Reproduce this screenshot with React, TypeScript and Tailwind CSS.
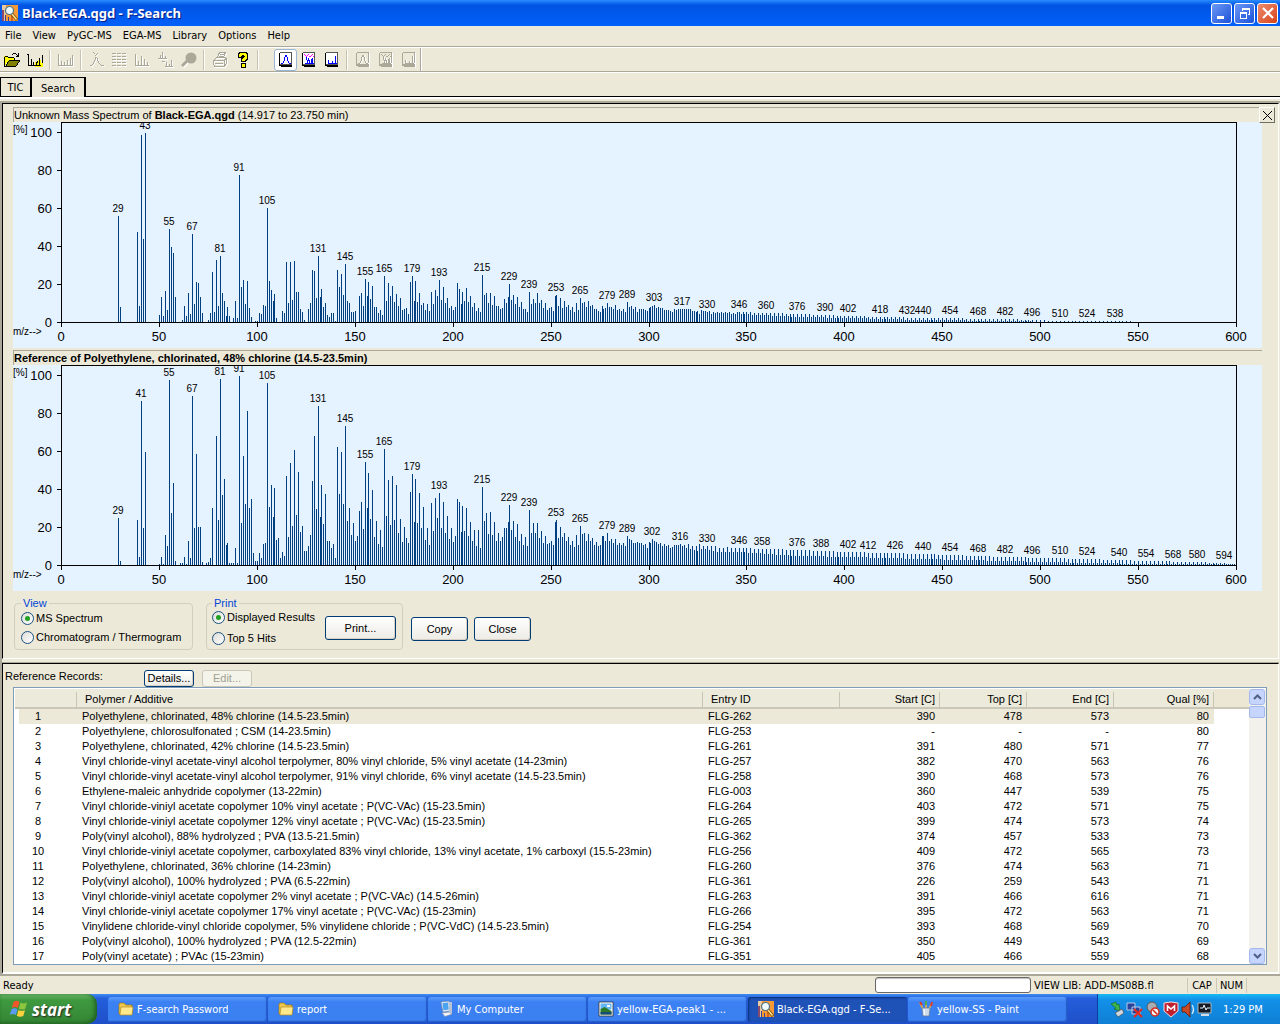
import { useEffect, useRef, useState } from "react";
import type { ReactNode } from "react";

type Peak = [number, number[]];

const unknownPeaks: Peak[] = [
  [29, [106, 15]],
  [39, [90, 16, 187, 83, 189]],
  [50, [7, 25, 6, 31, 12, 93, 75, 69, 25]],
  [62, [2, 16, 6, 29, 8, 88, 18, 40, 39, 25, 9]],
  [75, [2, 9, 50, 10, 62, 16, 66, 29, 21, 6, 15, 6]],
  [88, [4, 21, 4, 147, 35, 42, 18, 41, 14, 5]],
  [99, [1, 1, 9, 8, 17, 16, 114, 41, 32, 21, 28, 4]],
  [113, [11, 9, 60, 19, 60, 22, 61, 30, 30, 13, 10, 2]],
  [126, [13, 19, 52, 51, 24, 66, 25, 33, 15, 19, 7, 5, 9, 9, 1]],
  [141, [52, 35, 48, 27, 58, 21, 19, 10, 10, 11]],
  [152, [26, 29, 16, 43, 26, 40, 23, 36, 15, 15, 9, 12, 7, 46, 21, 39, 26, 36, 20, 28, 16, 24, 12, 13, 14, 8]],
  [178, [40, 46, 21, 41, 20, 29, 17, 19, 12, 18, 11, 30, 18, 32, 26, 42, 22, 35, 19, 24, 14, 16, 12, 15]],
  [202, [39, 33, 18, 30, 21, 34, 20, 26, 15, 19, 11, 14, 10, 47, 27, 29, 19, 29, 17, 26, 16, 16, 13, 14]],
  [226, [23, 19, 25, 38, 22, 27, 18, 25, 15, 20, 13, 13, 10, 30, 18, 23, 19, 29, 19, 22, 14, 19, 12, 14, 15, 11]],
  [252, [26, 27, 16, 24, 14, 21, 15, 17, 12, 15, 10, 19, 12, 24, 19, 20, 15, 21, 16, 17, 13, 13, 11, 10]],
  [276, [16, 13, 14, 19, 15, 15, 13, 17, 12, 13, 11, 13, 10, 20, 15, 16, 13, 15, 10, 13, 13, 13, 12, 11]],
  [300, [14, 15, 16, 17, 14, 15, 14, 14, 12, 12, 12, 11, 10, 13, 12, 13, 13, 13, 13, 13, 13, 13, 11, 11]],
  [324, [10, 11, 8, 12, 11, 11, 10, 11, 8, 10, 9, 10, 9, 10, 9, 10, 9, 10, 8, 9, 8, 10]],
];

const referencePeaks: Peak[] = [
  [29, [47, 4]],
  [39, [45, 8, 164, 37, 113]],
  [50, [1, 8, 1, 30, 19, 185, 52, 82, 4]],
  [61, [2, 2, 8, 1, 24, 7, 169, 37, 111, 38, 38, 3]],
  [74, [2, 3, 7, 57, 0, 129, 45, 186, 70, 86, 20, 22, 2, 2, 2, 17, 2]],
  [91, [189, 42, 109, 61, 154, 57, 66, 12, 4, 4, 12, 7, 21, 22]],
  [105, [182, 58, 80, 48, 77, 25, 27, 7, 13, 9, 89, 28, 102, 39, 115, 50, 93, 33, 39, 14, 14, 19, 30]],
  [128, [84, 129, 56, 159, 48, 80, 41, 71, 24, 24, 17, 21, 7, 118, 71, 113, 61, 139, 44, 57, 30, 42, 24, 29]],
  [152, [54, 63, 36, 103, 57, 92, 46, 75, 28, 44, 21, 35, 18, 116, 49, 85, 40, 89, 45, 80, 32, 46, 23, 38, 27, 22]],
  [178, [73, 91, 43, 86, 42, 72, 37, 58, 25, 37, 20, 62, 34, 67, 47, 72, 37, 63, 32, 49, 26, 37, 23, 29]],
  [202, [66, 63, 33, 59, 34, 57, 29, 43, 24, 35, 19, 35, 17, 78, 44, 52, 31, 53, 30, 43, 24, 32, 24, 28]],
  [226, [37, 37, 43, 60, 35, 44, 28, 41, 24, 31, 20, 28, 19, 55, 32, 42, 32, 42, 27, 34, 22, 29, 21, 22, 24, 20]],
  [252, [43, 45, 27, 38, 28, 32, 24, 28, 20, 24, 18, 30, 20, 39, 31, 32, 24, 31, 24, 27, 20, 23, 19, 20]],
  [276, [29, 29, 24, 32, 24, 26, 22, 26, 20, 22, 20, 22, 19, 29, 26, 25, 22, 22, 23, 22, 22, 20, 21, 17]],
  [300, [23, 22, 26, 24, 23, 21, 22, 19, 21, 19, 20, 17, 18, 20, 20, 20, 21, 19, 20, 17, 21, 16, 19, 15]],
  [324, [19, 14, 21, 16, 19, 16, 19, 15, 19, 14, 19, 13, 17, 13, 17, 13, 18, 13, 17, 13, 17, 13]],
];

// [m/z, even peak, odd peak], interpolated between the points
const unknownTail = [
  [346, 10, 8],
  [376, 8, 5],
  [402, 6, 4],
  [440, 4, 2],
  [482, 3, 1],
  [510, 1, 0],
  [546, 1, 0],
];
const referenceTail = [
  [346, 17, 13],
  [376, 15, 9],
  [402, 13, 8],
  [440, 11, 6],
  [482, 8, 4],
  [524, 6, 2],
  [554, 4, 1],
  [580, 3, 1],
  [599, 1, 1],
];

const unknownLabels = [
  29, 43, 55, 67, 81, 91, 105, 131, 145, 155, 165, 179, 193, 215, 229, 239, 253, 265, 279, 289, 303, 317, 330, 346,
  360, 376, 390, 402, 418, 432, 440, 454, 468, 482, 496, 510, 524, 538,
];
const referenceLabels = [
  29, 41, 55, 67, 81, 91, 105, 131, 145, 155, 165, 179, 193, 215, 229, 239, 253, 265, 279, 289, 302, 316, 330, 346,
  358, 376, 388, 402, 412, 426, 440, 454, 468, 482, 496, 510, 524, 540, 554, 568, 580, 594,
];

function buildSpectrum(peaks: Peak[], tail: number[][]) {
  const heights = new Map<number, number>();
  peaks.forEach(([start, values]) => values.forEach((v, i) => heights.set(start + i, v)));
  for (let i = 0; i < tail.length - 1; i++) {
    const [m0, hi0, lo0] = tail[i];
    const [m1, hi1, lo1] = tail[i + 1];
    for (let m = m0; m <= m1; m++) {
      const t = (m - m0) / (m1 - m0);
      const h = m % 2 === 0 ? hi0 + (hi1 - hi0) * t : lo0 + (lo1 - lo0) * t;
      heights.set(m, Math.round(h));
    }
  }
  return heights;
}

const unknownSpectrum = buildSpectrum(unknownPeaks, unknownTail);
const referenceSpectrum = buildSpectrum(referencePeaks, referenceTail);

const records = [
  ["Polyethylene, chlorinated, 48% chlorine (14.5-23.5min)", "FLG-262", "390", "478", "573", "80"],
  ["Polyethylene, chlorosulfonated ; CSM (14-23.5min)", "FLG-253", "-", "-", "-", "80"],
  ["Polyethylene, chlorinated, 42% chlorine (14.5-23.5min)", "FLG-261", "391", "480", "571", "77"],
  ["Vinyl chloride-vinyl acetate-vinyl alcohol terpolymer, 80% vinyl chloride, 5% vinyl acetate (14-23min)", "FLG-257", "382", "470", "563", "76"],
  ["Vinyl chloride-vinyl acetate-vinyl alcohol terpolymer, 91% vinyl chloride, 6% vinyl acetate (14.5-23.5min)", "FLG-258", "390", "468", "573", "76"],
  ["Ethylene-maleic anhydride copolymer (13-22min)", "FLG-003", "360", "447", "539", "75"],
  ["Vinyl chloride-viniyl acetate copolymer 10% vinyl acetate ; P(VC-VAc) (15-23.5min)", "FLG-264", "403", "472", "571", "75"],
  ["Vinyl chloride-viniyl acetate copolymer 12% vinyl acetate ; P(VC-VAc) (15-23.5min)", "FLG-265", "399", "474", "573", "74"],
  ["Poly(vinyl alcohol), 88% hydrolyzed ; PVA (13.5-21.5min)", "FLG-362", "374", "457", "533", "73"],
  ["Vinyl chloride-viniyl acetate copolymer, carboxylated 83% vinyl chloride, 13% vinyl acetate, 1% carboxyl (15.5-23min)", "FLG-256", "409", "472", "565", "73"],
  ["Polyethylene, chlorinated, 36% chlorine (14-23min)", "FLG-260", "376", "474", "563", "71"],
  ["Poly(vinyl alcohol), 100% hydrolyzed ; PVA (6.5-22min)", "FLG-361", "226", "259", "543", "71"],
  ["Vinyl chloride-viniyl acetate copolymer 2% vinyl acetate ; P(VC-VAc) (14.5-26min)", "FLG-263", "391", "466", "616", "71"],
  ["Vinyl chloride-viniyl acetate copolymer 17% vinyl acetate ; P(VC-VAc) (15-23min)", "FLG-266", "395", "472", "563", "71"],
  ["Vinylidene chloride-vinyl chloride copolymer, 5% vinylidene chloride ; P(VC-VdC) (14.5-23.5min)", "FLG-254", "393", "468", "569", "70"],
  ["Poly(vinyl alcohol), 100% hydrolyzed ; PVA (12.5-22min)", "FLG-361", "350", "449", "543", "69"],
  ["Poly(vinyl acetate) ; PVAc (15-23min)", "FLG-351", "405", "466", "559", "68"],
];

const SpectrumChart = ({
  title,
  spectrum,
  labels,
}: {
  title: string;
  spectrum: Map<number, number>;
  labels: number[];
}) => {
  const box = useRef<HTMLDivElement>(null);
  const [width, setWidth] = useState(1249);

  useEffect(() => {
    if (!box.current) return;
    const observer = new ResizeObserver(([entry]) => setWidth(Math.round(entry.contentRect.width)));
    observer.observe(box.current);
    return () => observer.disconnect();
  }, []);

  const left = 48;
  const base = 200;
  const right = width - 26;
  const x = (m: number) => left + Math.round((m * (right - left)) / 600);
  const clipId = "plot-" + title.slice(0, 3);

  return (
    <div ref={box} className="w-full overflow-hidden bg-[#e5f2ff]">
      <svg
        width={width}
        height={226}
        role="img"
        aria-label={title}
        className="block font-['Liberation_Sans',Arial,sans-serif]"
      >
        <clipPath id={clipId}>
          <rect x={left} y={1} width={right - left + 20} height={base} />
        </clipPath>
        <g shapeRendering="crispEdges">
          {[...spectrum].map(([m, h]) => (
            <rect key={m} x={x(m)} y={base - h} width={1} height={h} fill="#004080" />
          ))}
          <rect x={left} y={0} width={1} height={base + 5} />
          <rect x={right} y={0} width={1} height={base + 5} />
          <rect x={left} y={0} width={right - left} height={1} />
          <rect x={left} y={base} width={right - left} height={1} />
          {[0, 20, 40, 60, 80, 100].map((v) => (
            <rect key={v} x={left - 4} y={base - v * 1.9} width={4} height={1} />
          ))}
          {[50, 100, 150, 200, 250, 300, 350, 400, 450, 500, 550].map((m) => (
            <rect key={m} x={x(m)} y={base} width={1} height={5} />
          ))}
        </g>
        <g fontSize={13} textAnchor="end">
          {[0, 20, 40, 60, 80, 100].map((v) => (
            <text key={v} x={39} y={base + 5 - v * 1.9}>
              {v}
            </text>
          ))}
        </g>
        <g fontSize={13} textAnchor="middle">
          {[0, 50, 100, 150, 200, 250, 300, 350, 400, 450, 500, 550, 600].map((m) => (
            <text key={m} x={x(m)} y={219}>
              {m}
            </text>
          ))}
        </g>
        <g fontSize={10} textAnchor="middle" clipPath={`url(#${clipId})`}>
          {labels.map((m) => (
            <text key={m} x={x(m)} y={base - 4 - (spectrum.get(m) ?? 0)}>
              {m}
            </text>
          ))}
        </g>
        <text x={0} y={11} fontSize={10}>
          [%]
        </text>
        <text x={0} y={213} fontSize={10}>
          m/z--&gt;
        </text>
      </svg>
    </div>
  );
};

const Icon = ({ size = 16, children }: { size?: number; children: ReactNode }) => (
  <svg width={size} height={size} viewBox="0 0 16 16" fill="none" shapeRendering="crispEdges" aria-hidden="true">
    {children}
  </svg>
);

// Disabled toolbar drawings are engraved: a white copy one pixel down and right.
const Engraved = ({ d }: { d: string }) => (
  <Icon>
    <path d={d} transform="translate(1 1)" stroke="#fff" />
    <path d={d} stroke="#aca899" />
  </Icon>
);

const OpenIcon = () => (
  <Icon>
    <path d="M0 4h4v1h6v4H4l-3 5H0z" fill="#ff0" />
    <path d="M2 14l3-6h11l-4 6z" fill="#808000" />
    <path
      d="M.5 14V5M1 4.500h3M4 5.500h6M10.500 6v2M5 8.500h10M4.500 9v1M3.500 10v2M2.500 12v2M15.500 8v2M14.500 10v1M13.500 11v2M12.500 13v1M0 14.500h12"
      stroke="#000"
    />
    <path d="M8.500 2v1M9 1.500h3M12.500 2v1M13.500 3v1M14.500 1v4M12 4.500h3" stroke="#000" />
  </Icon>
);

const PeaksIcon = () => (
  <Icon>
    <path d="M8 10h3V8h3v3h2v4H8z" fill="#ff0" />
    <path
      d="M0 2.500h2M1.500 2v12M1 13.500h13M4.500 7v6M6.500 10v3M9.500 10v3M10.500 9v2M12.500 6v7M15.500 3v8"
      stroke="#000"
    />
  </Icon>
);

const PrinterIcon = () => (
  <Engraved d="M5.500 5l2-4.500h6l-2 4.500M8 2.500h4M7 4.500h4M1.500 8.500l3-3h9l1 2v4l-2 2.500h-10l-1-2zM2 8.500h10l2-2M3 11.500h8M12.500 9v5" />
);

const HelpIcon = () => (
  <Icon>
    <path d="M5 6V3h1V2h4v1h1v3h-1v1H9v1H8v2" stroke="#000" strokeWidth="4" />
    <path d="M6 11h5v5H6z" fill="#000" />
    <path d="M5 5V3h1V2h4v1h1v3h-1v1H9v1H8v1" stroke="#ff0" strokeWidth="1.800" />
    <path d="M7 12h3v3H7z" fill="#ff0" />
  </Icon>
);

const sheetLines = [
  "M3 11.500h2M5.500 9v2M6.500 5v4M7.500 3v2M8.500 3v2M9.500 5v4M10.500 9v2M11 11.500h2",
  "M4 11.500h9M5.500 5v3M6.500 8v3M7.500 6v3M8.500 8v3M10.500 7v4M11.500 6v5",
  "M4.500 8v3M4 11.500h9M8.500 9v2M11.500 4v7",
];

const Sheet = ({ kind, disabled }: { kind: number; disabled?: boolean }) => {
  const ink = disabled ? "#aca899" : "#00f";
  const edge = disabled ? "#aca899" : "#000";
  return (
    <Icon>
      {disabled && <path d="M14.500 1v15H3" stroke="#fff" />}
      <path d="M1.500 1.500l1-1h11v12h-12z" fill={disabled ? "#ece9d8" : "#fff"} stroke={disabled ? "#aca899" : "#555"} />
      <path d="M1.500 1v13M1 13.500h3M3 14.500h11M13.500 13v2M4 13.500h10" stroke={edge} />
      {disabled && <path d={sheetLines[kind]} stroke="#fff" transform="translate(1 0)" />}
      <path d={sheetLines[kind]} stroke={ink} />
      {kind === 1 && (
        <path
          d="M3 2.500h1M4 3.500h1M5 4.500h1M6 3.500h1M7 2.500h1M8 4.500h2M10 3.500h1M11 2.500h1M12 4.500h1"
          stroke={disabled ? ink : "#f0f"}
        />
      )}
    </Icon>
  );
};

const AppIcon = () => (
  <svg width="16" height="16" viewBox="0 0 16 16" aria-hidden="true">
    <path d="M0 0h16v16H0z" fill="#f59a35" />
    <path d="M0 0h4v16H0z" fill="#e8c9a0" />
    <path d="M0 5h2v11H0z" fill="#8c4a6b" />
    <path d="M3 10h1v6H3zM6 12h1v4H6z" fill="#3a3f8f" />
    <path d="M9 10h2v6H9z" fill="#d4641c" />
    <path d="M10 9l5 6" stroke="#7a4a12" strokeWidth="3" />
    <path d="M10 9l4.500 5.500" stroke="#fbe28a" strokeWidth="1.600" />
    <circle cx="7.500" cy="5.500" r="4" fill="#eefaff" stroke="#50707f" strokeWidth="1.200" />
  </svg>
);

const FolderIcon = () => (
  <svg width="16" height="16" viewBox="0 0 16 16" aria-hidden="true">
    <path d="M1 3l1-1h4l2 2h6v9H1z" fill="#f0c64b" stroke="#9b7516" strokeWidth=".7" />
    <path d="M2 13l1-7h12l-1 8H2z" fill="#ffe98c" stroke="#b38b22" strokeWidth=".7" />
  </svg>
);

const ComputerIcon = () => (
  <svg width="16" height="16" viewBox="0 0 16 16" aria-hidden="true">
    <path d="M3 1l8-1 1 10-7 1z" fill="#dfe9f5" stroke="#7e93b2" strokeWidth=".7" />
    <path d="M4.500 2.200l5.500-.8.700 7-5.300.9z" fill="#4aa3ef" />
    <path d="M11 1h3v12l-3 1z" fill="#b8c4d6" />
    <path d="M4 12l7-1 3 2-7 2.500z" fill="#f2f4f8" stroke="#8492a8" strokeWidth=".6" />
  </svg>
);

const ImageIcon = () => (
  <svg width="16" height="16" viewBox="0 0 16 16" aria-hidden="true">
    <path d="M1 1h14v14H1z" fill="#fff" stroke="#333" strokeWidth=".8" />
    <path d="M2.500 2.500h11v6h-11z" fill="#63b7f4" />
    <path d="M2.500 8l4-2 7 4v3.500h-11z" fill="#2b7a2a" />
    <path d="M2.500 11h11v2.500h-11z" fill="#174d76" />
    <path d="M9 4h3v2H9z" fill="#fff" />
  </svg>
);

const PaintIcon = () => (
  <svg width="16" height="16" viewBox="0 0 16 16" aria-hidden="true">
    <path d="M5 8L2 2M8 8V1M11 8l3-6" stroke="#e8b23c" strokeWidth="1.600" />
    <path d="M2 1l2 3M14 1l-1 4" stroke="#d83a2a" strokeWidth="2" />
    <path d="M8 0v4" stroke="#4bb24b" strokeWidth="2" />
    <path d="M4 7h8l-1 8H5z" fill="#cfdbe8" stroke="#6c7d95" strokeWidth=".7" />
    <path d="M6 8l.5 6" stroke="#fff" />
  </svg>
);

const FlagIcon = () => (
  <svg width="20" height="20" viewBox="0 0 20 20" aria-hidden="true">
    <path d="M4.500 3c2-1.600 4-1.600 6-.2L8.800 9C6.800 7.600 4.800 7.800 2.800 9z" fill="#f0562a" />
    <path d="M11.500 3.500c2 1.200 4 1.200 6.500 0L16.300 9.700c-2 1.200-4.500 1-6.500 0z" fill="#8cc63f" />
    <path d="M2.500 10.200c2-1.400 4-1.300 6 0L6.800 16c-2-1.300-4-1.200-6 0z" fill="#5b9bf5" />
    <path d="M9.500 10.900c2 1.200 4.300 1.200 6.500 0l-1.700 6c-2.200 1.200-4.400 1-6.500-.2z" fill="#fbd13c" />
  </svg>
);

const TrayIcons = () => (
  <svg width="102" height="17" viewBox="0 0 102 17" aria-hidden="true">
    <path d="M1 3l5-2 1 3 2-1 1 7-6-2 2-1z" fill="#3cb54a" stroke="#1c6b2b" strokeWidth=".7" />
    <path d="M5 12l7-4 2 4-6 4z" fill="#cfd6dc" stroke="#3d4a57" strokeWidth=".7" />
    <path d="M17 2h8v7h-8zM22 6h8v7h-8z" fill="#28449a" stroke="#b9c9e8" />
    <path d="M24 8l8 8M32 8l-8 8" stroke="#e3281d" strokeWidth="2" />
    <circle cx="42" cy="6" r="5" fill="#a9adb3" stroke="#555" />
    <circle cx="45" cy="11" r="4" fill="#f4f4f4" stroke="#d52b1e" strokeWidth="1.500" />
    <path d="M42.500 8.500l5 5" stroke="#d52b1e" strokeWidth="1.500" />
    <path d="M54 2l7-1 7 1v8l-7 6-7-6z" fill="#c01f2e" stroke="#f4dcdc" />
    <path d="M57.500 10V5l3.500 3 3.500-3v5" stroke="#fff" strokeWidth="1.600" fill="none" />
    <path d="M72 6h3l5-5v15l-5-5h-3z" fill="#c94a24" stroke="#5d1a0a" strokeWidth=".8" />
    <path d="M82 4q3 4.500 0 9" stroke="#dce9f8" strokeWidth="1.300" fill="none" />
    <path d="M88 2h13v10H88z" fill="#151a22" stroke="#a9b7c4" />
    <path d="M90 7h3l1-3 2 5 1-2h3" stroke="#e8f2ff" fill="none" />
    <path d="M91 14h8" stroke="#d5dbe2" strokeWidth="2" />
  </svg>
);

const disabledTools = [
  {
    name: "Peak pick",
    d: "M1 13.500h2M3.500 12v1M4.500 10v2M5.500 8v2M6.500 5v3M7.500 5v1M8.500 6v3M9.500 9v2M10.500 11v1M11 12.500h1M12 13.500h3M6.500 3v1M4 .500h1M5 1.500h1M7 2.500h1M8 1.500h1",
  },
  {
    name: "Peak table",
    d: "M0 1.500h4M5 1.500h4M10 1.500h4M0 4.500h4M5 4.500h4M10 4.500h4M0 7.500h4M5 7.500h4M10 7.500h4M0 10.500h4M5 10.500h4M10 10.500h4M0 13.500h4M5 13.500h4M10 13.500h4",
  },
  { name: "Spectrum", d: "M.500 2v12M0 13.500h14M3.500 9v5M6.500 4v10M9.500 7v7M12.500 10v4" },
  { name: "Subtract", d: "M0 6.500h9M2.500 3v4M4.500 0v7M7.500 4v3M7 14.500h8M8.500 10v5M11.500 12v3M13.500 8v7M4 9.500h3" },
];

const ToolButton = ({
  label,
  active,
  disabled,
  children,
}: {
  label: string;
  active?: boolean;
  disabled?: boolean;
  children: ReactNode;
}) => (
  <button
    type="button"
    aria-label={label}
    disabled={disabled}
    className={
      active
        ? "flex h-[22px] w-[23px] items-center justify-center rounded-[3px] border border-[#98b5d8] bg-white"
        : "flex h-[22px] w-[23px] items-center justify-center"
    }
  >
    {children}
  </button>
);

const Divider = () => <span className="mx-[3px] h-5 w-[2px] border-l border-[#c5c2b2] bg-white" />;

const XpButton = ({ className, disabled, children }: { className: string; disabled?: boolean; children: ReactNode }) => (
  <button
    type="button"
    disabled={disabled}
    className={`rounded-[3px] border border-[#003c74] bg-gradient-to-b from-white to-[#ecebe5] shadow-[inset_-1px_-1px_0_#d6d0c5] disabled:border-[#c9c7ba] disabled:bg-none disabled:bg-[#f5f4ea] disabled:text-[#a1a192] disabled:shadow-none ${className}`}
  >
    {children}
  </button>
);

const Radio = ({ name, label, defaultChecked }: { name: string; label: string; defaultChecked?: boolean }) => (
  <label className="flex items-center gap-[2px] whitespace-nowrap">
    <input
      type="radio"
      name={name}
      defaultChecked={defaultChecked}
      className="flex size-[13px] appearance-none items-center justify-center rounded-full border border-[#1c5180] bg-gradient-to-br from-[#dcdcd7] to-white checked:before:size-[5px] checked:before:rounded-full checked:before:bg-[#21a121]"
    />
    {label}
  </label>
);

const TaskButton = ({ icon, active, children }: { icon: ReactNode; active?: boolean; children: ReactNode }) => (
  <button
    type="button"
    className={
      active
        ? "flex h-[25px] min-w-0 flex-1 items-center gap-[3px] rounded-[3px] bg-[#1e52b7] pl-2.5 shadow-[inset_1px_1px_2px_#0c2f78]"
        : "flex h-[25px] min-w-0 flex-1 items-center gap-[3px] rounded-[3px] bg-gradient-to-b from-[#5a9bf9] via-[#3c81f3] via-20% to-[#3b80f0] pl-2.5 shadow-[inset_-1px_-1px_1px_#2559c4]"
    }
  >
    <span className="shrink-0">{icon}</span>
    <span className="truncate">{children}</span>
  </button>
);

const ScrollButton = ({ label, d }: { label: string; d: string }) => (
  <button
    type="button"
    aria-label={label}
    className="flex size-[16px] items-center justify-center rounded-[3px] border border-[#a3b9ee] bg-[#c6d5fd]"
  >
    <svg width="9" height="6" viewBox="0 0 9 6" fill="none" aria-hidden="true">
      <path d={d} stroke="#4d6185" strokeWidth="2" />
    </svg>
  </button>
);

const captionButton =
  "flex size-[21px] items-center justify-center rounded-[3px] border border-white bg-gradient-to-br";

export default function App() {
  return (
    <div className="flex min-h-screen flex-col bg-[#ece9d8] font-['Liberation_Sans',Arial,sans-serif] text-[11px] leading-[15px] text-black">
      <header className="flex h-[26px] items-center bg-gradient-to-b from-[#2a8bff] via-[#0054e3] via-20% to-[#0260fa] pr-[2px] pl-[2px]">
        <AppIcon />
        <h1 className="flex-1 pl-1 font-['Noto_Sans','Open_Sans',sans-serif] text-[13px] leading-5 font-bold whitespace-nowrap text-white [text-shadow:1px_1px_1px_#0a1883]">
          Black-EGA.qgd - F-Search
        </h1>
        <div className="flex gap-[2px]">
          <button type="button" aria-label="Minimize" className={`${captionButton} from-[#6c98f5] to-[#1b4fd8]`}>
            <Icon>
              <path d="M3 11h7v3H3z" fill="#fff" />
            </Icon>
          </button>
          <button type="button" aria-label="Restore" className={`${captionButton} from-[#6c98f5] to-[#1b4fd8]`}>
            <Icon>
              <path d="M5 3h8M5 4h8M12.500 4v6M11 9.500h2M5.500 4v2" stroke="#fff" />
              <path d="M3 7h7v7H3z" fill="#fff" />
              <path d="M4 9h5v4H4z" fill="#3a6ce4" />
            </Icon>
          </button>
          <button type="button" aria-label="Close window" className={`${captionButton} from-[#ec8a6c] to-[#d8400f]`}>
            <svg width="16" height="16" viewBox="0 0 16 16" aria-hidden="true">
              <path d="M3 3l10 10M13 3L3 13" stroke="#fff" strokeWidth="2.200" />
            </svg>
          </button>
        </div>
      </header>

      <nav className="flex h-[21px] items-center gap-[11px] border-b border-[#aca899] pb-[2px] pl-[5px] font-['DejaVu_Sans_Condensed','Noto_Sans',sans-serif]">
        {["File", "View", "PyGC-MS", "EGA-MS", "Library", "Options", "Help"].map((item) => (
          <button key={item} type="button">
            {item}
          </button>
        ))}
      </nav>

      <div className="flex h-[25px] items-center border-t border-b border-t-white border-b-[#aca899]">
        <ToolButton label="Open">
          <OpenIcon />
        </ToolButton>
        <ToolButton label="Chromatogram">
          <PeaksIcon />
        </ToolButton>
        <Divider />
        <ToolButton label="Overlay" disabled>
          <Engraved d="M.500 2v12M0 13.500h15M3.500 9v5M6.500 10v4M9.500 8v6M12.500 6v8M14.500 3v11" />
        </ToolButton>
        <Divider />
        {disabledTools.map((tool) => (
          <ToolButton key={tool.name} label={tool.name} disabled>
            <Engraved d={tool.d} />
          </ToolButton>
        ))}
        <ToolButton label="Find" disabled>
          <svg width="16" height="16" viewBox="0 0 16 16" aria-hidden="true">
            <path d="M2 15l5-5" stroke="#fff" strokeWidth="3" />
            <circle cx="10" cy="6" r="5.500" fill="#aca899" />
            <path d="M1 14l5-5" stroke="#aca899" strokeWidth="3" />
          </svg>
        </ToolButton>
        <Divider />
        <ToolButton label="Print" disabled>
          <PrinterIcon />
        </ToolButton>
        <ToolButton label="Help">
          <HelpIcon />
        </ToolButton>
        <Divider />
        <span className="w-[12px]" />
        <ToolButton label="Chromatogram view" active>
          <Sheet kind={0} />
        </ToolButton>
        <ToolButton label="Combined view">
          <Sheet kind={1} />
        </ToolButton>
        <ToolButton label="Spectrum view">
          <Sheet kind={2} />
        </ToolButton>
        <Divider />
        <ToolButton label="Copy chromatogram" disabled>
          <Sheet kind={0} disabled />
        </ToolButton>
        <ToolButton label="Copy combined" disabled>
          <Sheet kind={1} disabled />
        </ToolButton>
        <ToolButton label="Copy spectrum" disabled>
          <Sheet kind={2} disabled />
        </ToolButton>
        <span className="h-full w-[2px] border-l border-[#aca899] bg-white" />
      </div>

      <div
        role="tablist"
        className="flex h-[25px] items-end border-t border-t-white font-['DejaVu_Sans_Condensed','Noto_Sans',sans-serif]"
      >
        <button
          type="button"
          role="tab"
          aria-selected={false}
          className="h-5 w-8 border-t border-r-2 border-b border-l border-black"
        >
          TIC
        </button>
        <button
          type="button"
          role="tab"
          aria-selected
          className="h-5 w-[54px] border-t border-r-2 border-black pt-[2px]"
        >
          Search
        </button>
        <span className="flex-1 border-b border-black" />
      </div>
      <div className="h-[4px] border-t-2 border-white" />

      <main className="flex flex-1 flex-col border-t-2 border-l-2 border-[#aca899] pr-[1px]">
        <section className="border-t border-r border-b border-l border-t-black border-r-white border-b-white border-l-black pb-[1px] pl-[10px]">
          <div className="flex items-start pt-[3px]">
            <div className="min-w-0 flex-1">
              <h2 className="h-[15px] border-t border-l border-[#aca899] text-[11px] leading-[15px]">
                Unknown Mass Spectrum of <b>Black-EGA.qgd</b> (14.917 to 23.750 min)
              </h2>
              <SpectrumChart title="Unknown mass spectrum" spectrum={unknownSpectrum} labels={unknownLabels} />
              <h2 className="mt-[2px] h-[15px] border-t border-l border-[#aca899] text-[11px] leading-[14px] font-bold">
                Reference of Polyethylene, chlorinated, 48% chlorine (14.5-23.5min)
              </h2>
              <SpectrumChart title="Reference spectrum" spectrum={referenceSpectrum} labels={referenceLabels} />
            </div>
            <div className="w-4">
              <button
                type="button"
                aria-label="Close panel"
                className="-ml-[3px] flex size-4 items-center justify-center border border-t-white border-r-[#716f64] border-b-[#716f64] border-l-white bg-[#ece9d8]"
              >
                <svg width="9" height="9" viewBox="0 0 9 9" aria-hidden="true">
                  <path d="M0 0l9 9M9 0L0 9" stroke="#000" />
                </svg>
              </button>
            </div>
          </div>

          <form className="flex items-start gap-[6px] pt-[6px] pb-[7px] pl-[1px]">
            <fieldset className="mr-[7px] h-[53px] w-[179px] rounded-[4px] border border-[#d0d0bf] pl-[6px]">
              <legend className="px-[2px] leading-[13px] text-[#0046d5]">View</legend>
              <div className="flex flex-col gap-[4px] pt-[1px]">
                <Radio name="view" label="MS Spectrum" defaultChecked />
                <Radio name="view" label="Chromatogram / Thermogram" />
              </div>
            </fieldset>
            <fieldset className="h-[53px] w-[197px] rounded-[4px] border border-[#d0d0bf] pl-[5px]">
              <legend className="px-[2px] leading-[13px] text-[#0046d5]">Print</legend>
              <div className="flex items-center">
                <div className="flex flex-1 flex-col gap-[6px]">
                  <Radio name="print" label="Displayed Results" defaultChecked />
                  <Radio name="print" label="Top 5 Hits" />
                </div>
                <XpButton className="mr-[6px] h-6 w-[71px]">Print...</XpButton>
              </div>
            </fieldset>
            <XpButton className="mt-5 ml-[2px] h-6 w-[57px]">Copy</XpButton>
            <XpButton className="mt-5 h-6 w-[57px]">Close</XpButton>
          </form>
        </section>

        <div className="mt-[3px] border-t border-[#aca899]" />
        <section className="flex-1 border-t border-r border-b-2 border-l border-t-black border-r-white border-b-white border-l-black pb-[7px]">
          <div className="flex h-[23px] items-end pl-[2px]">
            <h2 className="w-[139px] pb-[3px] text-[11px]">Reference Records:</h2>
            <XpButton className="h-[17px] w-[50px]">Details...</XpButton>
            <XpButton disabled className="ml-[8px] h-[17px] w-[50px]">
              Edit...
            </XpButton>
          </div>

          <div className="mr-[11px] ml-[10px] flex border border-[#7f9db9] bg-white pt-[1px] pl-[1px]">
            <table className="w-full flex-1 table-fixed border-separate border-spacing-0">
              <colgroup>
                <col className="w-[62px]" />
                <col />
                <col className="w-[137px]" />
                <col className="w-[100px]" />
                <col className="w-[87px]" />
                <col className="w-[87px]" />
                <col className="w-[100px]" />
                <col className="w-[35px]" />
              </colgroup>
              <thead className="bg-[#ebeadb] text-left shadow-[inset_0_-2px_0_#cbc7b8]">
                <tr>
                  {["", "Polymer / Additive", "Entry ID", "Start [C]", "Top [C]", "End [C]", "Qual [%]"].map((head, i) => (
                    <th key={head} scope="col" className="h-[20px] p-0 font-normal">
                      <span
                        className={
                          i < 3
                            ? "my-[2px] block border-r border-[#c7c5b2] pl-2 leading-[15px]"
                            : "my-[2px] block border-r border-[#c7c5b2] pr-1 text-right leading-[15px]"
                        }
                      >
                        {head || "\u00a0"}
                      </span>
                    </th>
                  ))}
                  <td className="bg-[#ece6d5] p-0 shadow-[inset_0_-2px_0_#cbc7b8]" />
                </tr>
              </thead>
              <tbody>
                {records.map(([polymer, entry, ...values], i) => (
                  <tr key={i} className="group">
                    <td className="border-l-4 border-white p-0 pr-5 text-center group-first:bg-[#ece9d8]">{i + 1}</td>
                    <td className="truncate p-0 pl-[5px] group-first:bg-[#ece9d8]">{polymer}</td>
                    <td className="p-0 pl-[5px] group-first:bg-[#ece9d8]">{entry}</td>
                    {values.map((value, k) => (
                      <td key={k} className="p-0 pr-[5px] text-right group-first:bg-[#ece9d8]">
                        {value}
                      </td>
                    ))}
                    <td className="p-0" />
                  </tr>
                ))}
              </tbody>
            </table>
            <div className="flex w-[17px] flex-col bg-[#f3f1ec]">
              <ScrollButton label="Scroll up" d="M1 5l3.500-3.500L8 5" />
              <span className="mt-[1px] h-3 w-4 rounded-[2px] border border-[#a3b9ee] bg-[#c6d5fd]" />
              <span className="flex-1" />
              <ScrollButton label="Scroll down" d="M1 1l3.500 3.500L8 1" />
            </div>
          </div>
        </section>
      </main>

      <footer className="flex h-[20px] items-center border-t-2 border-[#aca899] pl-[3px] font-['DejaVu_Sans_Condensed','Noto_Sans',sans-serif]">
        <span className="flex-1">Ready</span>
        <input
          aria-label="Progress"
          readOnly
          className="h-4 w-[156px] rounded-[3px] border border-[#686868] bg-white shadow-[inset_0_1px_1px_#bebebe]"
        />
        <span className="w-[157px] border-r border-[#cdc9b8] pl-[3px] whitespace-nowrap">VIEW LIB: ADD-MS08B.fl</span>
        <span className="w-[29px] border-r border-[#cdc9b8] text-center">CAP</span>
        <span className="w-[30px] border-r border-[#cdc9b8] text-center">NUM</span>
        <span className="w-[33px]" />
      </footer>

      <div className="flex h-[30px] items-center bg-gradient-to-b from-[#3f8cf3] via-[#245edb] via-15% to-[#1f4fc8] font-['DejaVu_Sans_Condensed','Noto_Sans',sans-serif] text-white">
        <button
          type="button"
          className="mr-[11px] flex h-full w-[97px] items-center gap-[3px] rounded-r-[10px] bg-gradient-to-b from-[#6cb86c] via-[#3f9a3f] via-20% to-[#348534] pl-[9px] font-['Open_Sans','Noto_Sans',sans-serif] text-[17px] font-bold italic shadow-[inset_-2px_-1px_4px_#1d5c1d] [text-shadow:1px_1px_2px_#222]"
        >
          <FlagIcon />
          start
        </button>
        <div className="flex min-w-0 flex-1 gap-[1px] pr-[30px]">
          <TaskButton icon={<FolderIcon />}>F-search Password</TaskButton>
          <TaskButton icon={<FolderIcon />}>report</TaskButton>
          <TaskButton icon={<ComputerIcon />}>My Computer</TaskButton>
          <TaskButton icon={<ImageIcon />}>yellow-EGA-peak1 - ...</TaskButton>
          <TaskButton icon={<AppIcon />} active>
            Black-EGA.qgd - F-Se...
          </TaskButton>
          <TaskButton icon={<PaintIcon />}>yellow-SS - Paint</TaskButton>
        </div>
        <div className="flex h-full w-[183px] items-center gap-[11px] border-l border-[#0a3f9e] bg-gradient-to-b from-[#19b9f3] via-[#1290e8] via-20% to-[#0f7fd4] pl-3">
          <TrayIcons />
          <span className="whitespace-nowrap">1:29 PM</span>
        </div>
      </div>
    </div>
  );
}
